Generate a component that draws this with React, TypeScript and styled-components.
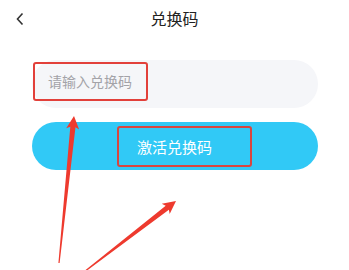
import React from 'react';
import styled, { createGlobalStyle } from 'styled-components';

const GlobalStyle = createGlobalStyle`
  html, body {
    margin: 0;
    padding: 0;
    background: #ffffff;
  }
  body {
    font-family: "Noto Sans CJK SC", "Noto Sans", sans-serif;
  }
`;

const Page = styled.div`
  position: relative;
  width: 349px;
  height: 270px;
  overflow: hidden;
  background: #fff;
`;

const Header = styled.header`
  position: relative;
  height: 36px;
  display: flex;
  align-items: center;
  justify-content: center;
`;

const BackBtn = styled.button`
  position: absolute;
  left: 12px;
  top: 10px;
  width: 16px;
  height: 18px;
  padding: 0;
  border: 0;
  background: none;
  display: flex;
  align-items: center;
  justify-content: center;
`;

const Title = styled.h1`
  margin: 0;
  font-size: 16px;
  font-weight: 400;
  color: #222;
  line-height: 1;
`;

const Body = styled.main`
  display: flex;
  flex-direction: column;
  gap: 14px;
  padding: 24px 31px 0 32px;
`;

const Field = styled.label`
  height: 48px;
  border-radius: 24px;
  background: #f5f6f9;
  display: flex;
  align-items: center;
  padding-left: 1px;
`;

const Marked = styled.span<{ $radius?: number }>`
  display: inline-flex;
  align-items: center;
  border: 2px solid #e2403a;
  border-radius: ${p => p.$radius ?? 3}px;
  box-sizing: border-box;
`;

const Placeholder = styled(Marked)`
  width: 115px;
  height: 39px;
  margin-top: -6px;
  padding-left: 13px;
  font-size: 14px;
  color: #a3a3a8;
`;

const Submit = styled.button`
  height: 48px;
  border: 0;
  border-radius: 24px;
  background: #31c9f6;
  display: flex;
  align-items: center;
  justify-content: center;
  padding: 0;
  font-family: inherit;
`;

const SubmitLabel = styled(Marked)`
  width: 135px;
  height: 41px;
  margin-left: 19px;
  padding-left: 18px;
  font-size: 15px;
  color: #fff;
  border-color: #d8453f;
`;

const Overlay = styled.svg`
  position: absolute;
  left: 0;
  top: 0;
  pointer-events: none;
`;

function Arrow({ x1, y1, x2, y2 }: { x1: number; y1: number; x2: number; y2: number }) {
  const dx = x2 - x1;
  const dy = y2 - y1;
  const len = Math.hypot(dx, dy);
  const ux = dx / len;
  const uy = dy / len;
  const px = -uy;
  const py = ux;
  const head = 13;
  const hw = 6.5;
  const bx = x2 - ux * head;
  const by = y2 - uy * head;
  const sw = 2.6;
  const pts = [
    [x1 + px * 0.6, y1 + py * 0.6],
    [bx + ux * 2 + px * sw, by + uy * 2 + py * sw],
    [bx + px * hw, by + py * hw],
    [x2, y2],
    [bx - px * hw, by - py * hw],
    [bx + ux * 2 - px * sw, by + uy * 2 - py * sw],
    [x1 - px * 0.6, y1 - py * 0.6],
  ]
    .map(p => p.join(','))
    .join(' ');
  return <polygon points={pts} fill="#ee3a2e" />;
}

export default function App() {
  return (
    <>
      <GlobalStyle />
      <Page>
        <Header>
          <BackBtn aria-label="back">
            <svg width="10" height="14" viewBox="0 0 10 14">
              <path d="M7.5 1.5 L2.5 7 L7.5 12.5" fill="none" stroke="#333" strokeWidth="1.6" />
            </svg>
          </BackBtn>
          <Title>兑换码</Title>
        </Header>
        <Body>
          <Field>
            <Placeholder>请输入兑换码</Placeholder>
          </Field>
          <Submit>
            <SubmitLabel>激活兑换码</SubmitLabel>
          </Submit>
        </Body>
        <Overlay width="349" height="270" viewBox="0 0 349 270">
          <Arrow x1={59} y1={263} x2={74} y2={116} />
          <Arrow x1={84} y1={272} x2={176} y2={201} />
        </Overlay>
      </Page>
    </>
  );
}
